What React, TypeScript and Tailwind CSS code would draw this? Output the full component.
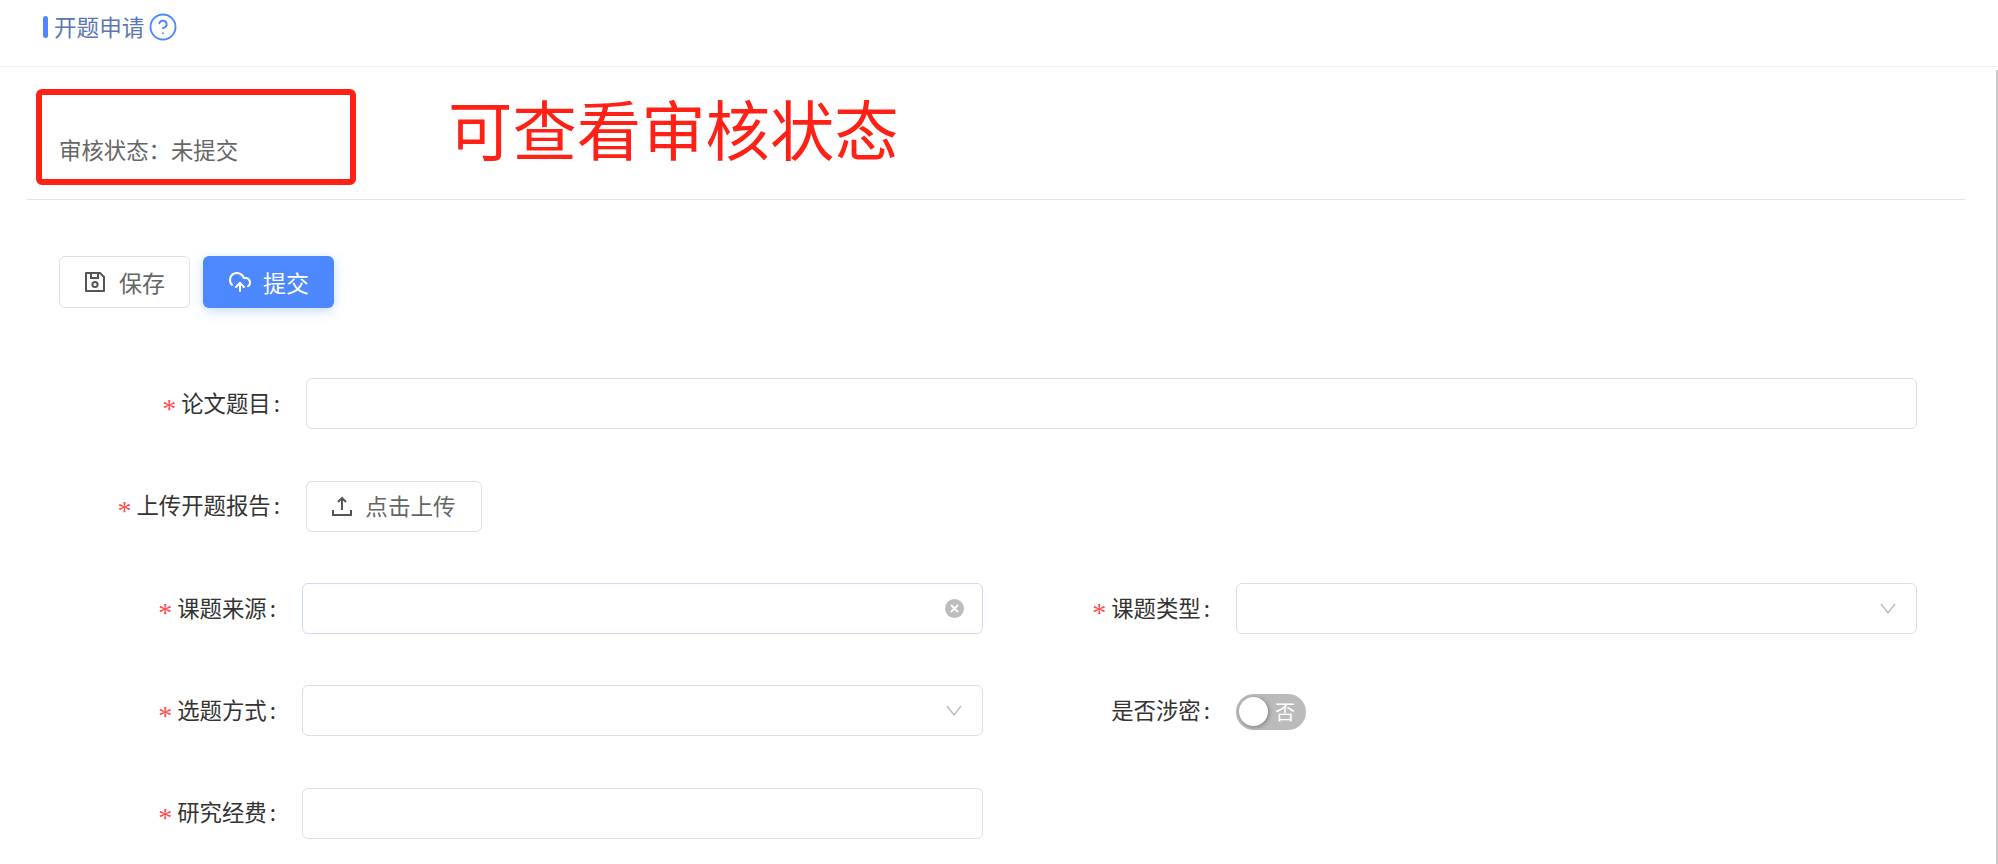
import { CircleHelp, CloudUpload } from 'lucide-react'

const FormLabel = ({ text, required = true, className }: { text: string; required?: boolean; className: string }) => (
  <label className={`shrink-0 flex items-center justify-end pb-[2px] text-[22.4px] text-[#333] ${className}`}>
    {required && <span className="mr-[5px] w-[14px] text-[28px] leading-none text-[#ff4d4f] font-['Liberation_Serif',serif] translate-y-[6px] text-center">*</span>}
    {text}
    <span className="ml-[3px]">:</span>
  </label>
)

const Chevron = () => (
  <svg className="w-[16px] h-[11px] text-[#bbb]" viewBox="0 0 16 11" fill="none" stroke="currentColor" strokeWidth="1.4">
    <polyline points="1,1 8,10 15,1" />
  </svg>
)

const fieldClass = 'h-[51px] rounded-[6px] border border-[#dcdfe6] bg-white flex items-center justify-end pr-[20px]'

function App() {
  return (
    <div className="relative h-screen overflow-hidden bg-white font-['Noto_Sans_CJK_SC',sans-serif]">
      {/* Title bar */}
      <header className="h-[67px] border-b border-[#f0f0f0] flex items-center pl-[43px] pb-[12px]">
        <span className="w-[5px] h-[22px] rounded-full bg-[#4d88ff]" />
        <h1 className="ml-[6px] text-[22.6px] font-normal text-[#5b76b5]">开题申请</h1>
        <CircleHelp className="ml-[4px] text-[#4d88ff]" size={30} strokeWidth={1.5} />
      </header>

      <div className="mt-[3px] h-full border-r-2 border-[#c8c8c8]">
        {/* Review status */}
        <section className="relative mx-[27px] mr-[31px] h-[130px] border-b border-[#e4e4e4] flex items-end pb-[39px] pl-[32px]">
          <p className="text-[22.4px] leading-none text-[#666]">审核状态：未提交</p>
        </section>

        {/* Toolbar */}
        <div className="mt-[56px] ml-[59px] flex gap-[13px]">
          <button className="w-[131px] h-[52px] rounded-[6px] border border-[#dcdfe6] bg-white flex items-center justify-center gap-[13px] text-[23px] text-[#666]">
            <svg className="w-[22px] h-[22px]" viewBox="0 0 22 22" fill="none" stroke="#555" strokeWidth="2">
              <path d="M2 2h14l4 4v14H2z" strokeLinejoin="round" />
              <path d="M7 2v5h7V2" />
              <circle cx="11" cy="13.5" r="2.6" />
            </svg>
            保存
          </button>
          <button className="w-[131px] h-[52px] rounded-[6px] bg-[#4d88ff] shadow-[0_3px_12px_rgba(77,136,255,0.3)] flex items-center justify-center gap-[11px] text-[23px] text-white">
            <CloudUpload size={24} strokeWidth={2} />
            提交
          </button>
        </div>

        {/* Form */}
        <form className="mt-[70.4px] flex flex-col gap-[51.3px]">
          <div className="flex items-center h-[51px]">
            <FormLabel text="论文题目" className="w-[306px] pr-[26px]" />
            <div className="w-[1611px] h-[51px] rounded-[6px] border border-[#dcdfe6] bg-white" />
          </div>

          <div className="flex items-center h-[51px]">
            <FormLabel text="上传开题报告" className="w-[306px] pr-[26px]" />
            <button type="button" className="w-[176px] h-[51px] rounded-[6px] border border-[#dcdfe6] bg-white flex items-center justify-center gap-[13px] text-[22.6px] text-[#666]">
              <svg className="w-[20px] h-[20px]" viewBox="0 0 20 20" fill="none" stroke="#555" strokeWidth="2">
                <path d="M10 14V2M6 6l4-4 4 4" />
                <path d="M1 14v5h18v-5" />
              </svg>
              点击上传
            </button>
          </div>

          <div className="flex items-center h-[51px]">
            <FormLabel text="课题来源" className="w-[302px] pr-[26px]" />
            <div className="w-[681px] h-[51px] rounded-[6px] border border-[#cfdbf3] bg-white flex items-center justify-end pr-[18px]">
              <span className="relative w-[19px] h-[19px] rounded-full bg-[#bdbdbd] flex items-center justify-center text-white">
                <svg className="w-[9px] h-[9px]" viewBox="0 0 9 9" stroke="currentColor" strokeWidth="1.8">
                  <path d="M1 1l7 7M8 1l-7 7" />
                </svg>
              </span>
            </div>
            <FormLabel text="课题类型" className="w-[253px] pr-[26px]" />
            <div className={`w-[681px] ${fieldClass}`}>
              <Chevron />
            </div>
          </div>

          <div className="flex items-center h-[51px]">
            <FormLabel text="选题方式" className="w-[302px] pr-[26px]" />
            <div className={`w-[681px] ${fieldClass}`}>
              <Chevron />
            </div>
            <FormLabel text="是否涉密" required={false} className="w-[253px] pr-[26px]" />
            <div className="mt-[2px] w-[70px] h-[36px] rounded-full bg-[#bbbbbb] flex items-center pl-[3px] gap-[7px] text-[20px] text-white">
              <span className="w-[29px] h-[29px] rounded-full bg-white shadow-[1px_1px_4px_rgba(0,0,0,0.35)]" />
              否
            </div>
          </div>

          <div className="flex items-center h-[51px]">
            <FormLabel text="研究经费" className="w-[302px] pr-[26px]" />
            <div className="w-[681px] h-[51px] rounded-[6px] border border-[#dcdfe6] bg-white" />
          </div>
        </form>
      </div>

      {/* Red annotation drawn over the page */}
      <div className="absolute left-[36px] top-[89px] w-[320px] h-[96px] rounded-[6px] border-[6px] border-[#ff2016]" />
      <p className="absolute left-[448px] top-[81px] text-[64.4px] leading-[92px] text-[#ff2016]">可查看审核状态</p>
    </div>
  )
}

export default App
